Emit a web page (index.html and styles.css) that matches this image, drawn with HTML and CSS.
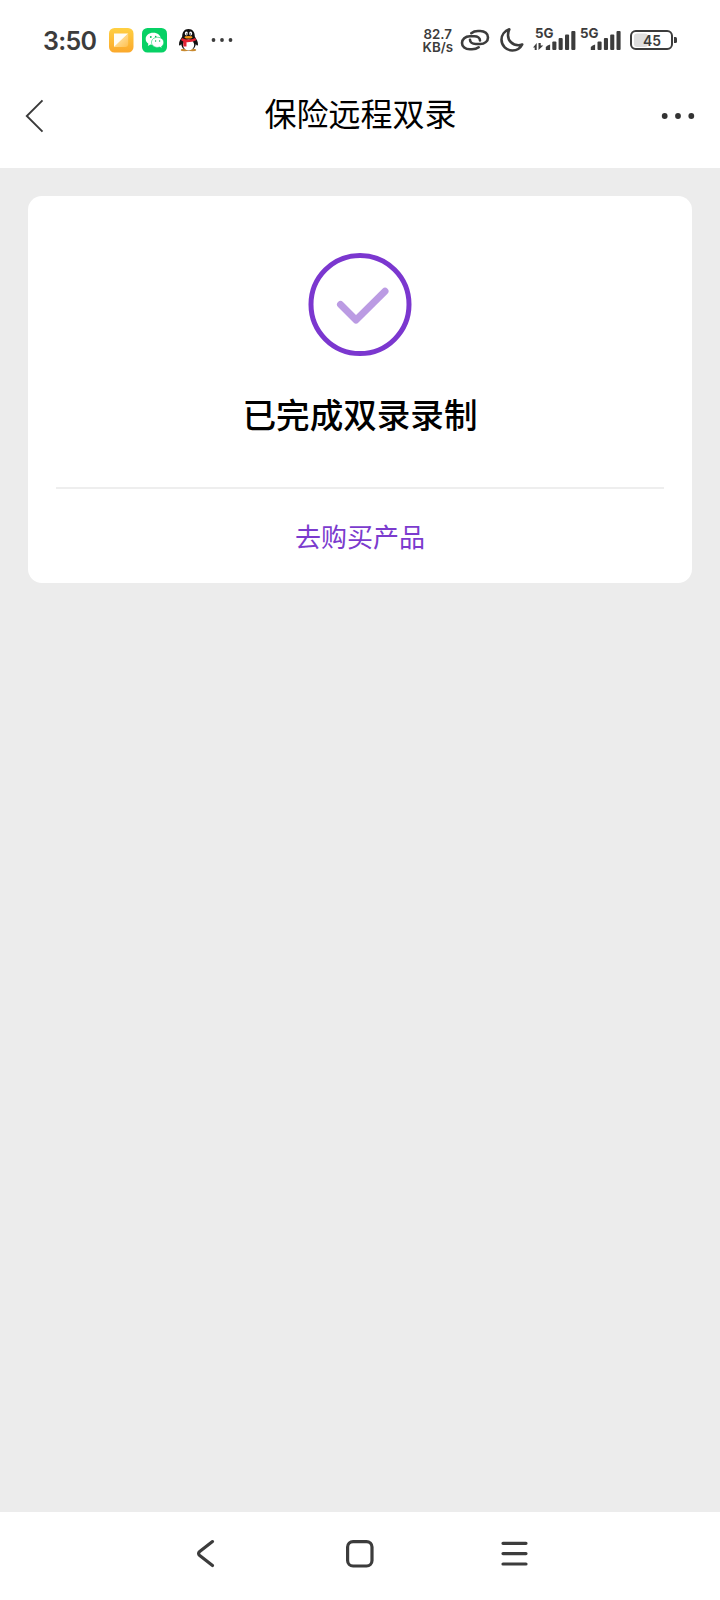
FILE: index.html
```html
<!DOCTYPE html>
<html lang="zh-CN">
<head>
<meta charset="utf-8">
<title>保险远程双录</title>
<link rel="stylesheet" href="styles.css">
</head>
<body>
<div class="screen">
  <div class="status">
    <span class="time">3:50</span>
    <svg class="apps" width="128" height="30" viewBox="106 25 128 30">
      <defs>
        <linearGradient id="sun" x1="0" y1="0" x2="0" y2="1"><stop offset="0" stop-color="#ffd042"/><stop offset="1" stop-color="#fba82c"/></linearGradient>
        <linearGradient id="fold" x1="0" y1="0" x2="1" y2="1"><stop offset="0" stop-color="#fff0c4"/><stop offset="1" stop-color="#ffc04e"/></linearGradient>
      </defs>
      <rect x="109" y="28" width="24.5" height="24.5" rx="5.5" fill="url(#sun)"/>
      <path d="M114 33.500h14.200L114 47.200z" fill="#fffdf5"/>
      <path d="M128.200 33.500V44q0 3-3 3H114z" fill="url(#fold)"/>
      <rect x="142" y="28" width="25" height="24.500" rx="5.500" fill="#07d165"/>
      <path d="M153.300 32.800c-4.400 0-7.600 2.700-7.600 6.100 0 2 1 3.700 2.700 4.800l-.6 2.200 2.700-1.300c1 .3 1.900.4 2.800.4 4.200 0 7.500-2.700 7.500-6.100s-3.200-6.100-7.500-6.100z" fill="#fff"/>
      <path d="M157.600 37.300c-3.700 0-6.100 2.300-6.100 5.100s2.600 5 6.100 5c.8 0 1.500-.1 2.200-.3l2.300 1.200-.6-1.900c1.400-1 2.200-2.400 2.200-4 0-2.800-2.600-5.100-6.100-5.100z" fill="#fff" stroke="#07d165" stroke-width=".6"/>
      <g fill="#07b95a"><circle cx="150.800" cy="37" r=".9"/><circle cx="155.700" cy="36.600" r=".8"/><circle cx="155.600" cy="41" r=".7"/><circle cx="159.600" cy="41" r=".7"/></g>
      <path d="M188.500 29c-4.300 0-6.300 3.200-6.300 7.500-1.500 2.500-3.300 5-3.200 8 .1 1.500 1 1.600 2.200-.5.300 3.200 2.500 6.500 7.300 6.500s7-3.300 7.300-6.500c1.200 2.100 2.100 2 2.200.5.100-3-1.700-5.500-3.200-8 0-4.300-2-7.500-6.300-7.500z" fill="#111"/>
      <ellipse cx="184.500" cy="50" rx="3.700" ry="1.200" fill="#c98a30"/><ellipse cx="192.500" cy="50" rx="3.700" ry="1.200" fill="#c98a30"/>
      <ellipse cx="188.600" cy="44.900" rx="5.600" ry="5.300" fill="#fff"/>
      <path d="M181.900 37.900q6.700 3.200 13.400 0l.9 2.300q-4.500 2.200-9.700 2v4.200h-3.200v-5q-1.500-.6-2.300-1.400z" fill="#e32233"/>
      <ellipse cx="186.400" cy="33.600" rx="1.500" ry="2" fill="#fff"/><ellipse cx="190.600" cy="33.600" rx="1.500" ry="2" fill="#fff"/>
      <circle cx="186.900" cy="34" r=".7" fill="#111"/><circle cx="190.200" cy="34" r=".7" fill="#111"/>
      <ellipse cx="188.500" cy="37.300" rx="4" ry="1.300" fill="#f59a16"/>
      <g fill="#3c3c3c"><circle cx="213.500" cy="40" r="1.900"/><circle cx="222" cy="40" r="1.900"/><circle cx="230.500" cy="40" r="1.900"/></g>
    </svg>
    <div class="speed"><span>82.7</span><span>KB/s</span></div>
    <svg class="signals" width="222" height="36" viewBox="458 22 222 36">
      <g fill="none" stroke="#3c3c3c" stroke-width="2.600" stroke-linecap="round" stroke-linejoin="round">
        <path d="M471.300 33.200Q474 31 478 31h2.200c4.500 0 7.800 2.800 7.800 6.400 0 3.800-3.300 6.600-7.800 6.600h-4.500c-3.400 0-5.700-1.800-5.700-4.200"/>
        <path d="M478.700 47.300Q476 49.300 472 49.300h-2.200c-4.500 0-7.800-2.800-7.800-6.400 0-3.800 3.300-6.600 7.800-6.600h4.500c3.400 0 5.700 1.800 5.700 4.200"/>
        <path d="M509.300 29.300c-4.500 1.500-7.800 5.600-7.800 10.400 0 6 4.900 10.800 10.900 10.800 4.300 0 8-2.400 9.800-6-1.200.5-2.500.7-3.900.7-5.700 0-10.300-4.400-10.300-9.900 0-2.200.4-4.300 1.300-6z"/>
      </g>
      <g class="net"><text x="535" y="38.300" textLength="18.500" lengthAdjust="spacingAndGlyphs">5G</text><text x="580" y="38.300" textLength="18.500" lengthAdjust="spacingAndGlyphs">5G</text></g>
      <g fill="#3c3c3c">
        <path d="M533 47.500l3.700-4.500V50h-2v-2.500zM543.300 45.500L538.500 50v-7h2.200v2.500z"/>
        <path d="M545.800 50v-3q1.500-2 4.300-2.500V50z"/><rect x="552.300" y="41.500" width="4.100" height="8.500" rx="1"/><rect x="558.600" y="38" width="4.100" height="12" rx="1"/><rect x="565" y="34.500" width="4.100" height="15.500" rx="1"/><rect x="571.300" y="31" width="4.100" height="19" rx="1"/>
        <path d="M590.800 50v-3q1.500-2 4.300-2.500V50z"/><rect x="597.500" y="41.500" width="4.100" height="8.500" rx="1"/><rect x="603.900" y="38" width="4.100" height="12" rx="1"/><rect x="610.200" y="34.500" width="4.100" height="15.500" rx="1"/><rect x="616.500" y="31" width="4.100" height="19" rx="1"/>
      </g>
      <rect x="634" y="33.500" width="14" height="13.500" rx="3" fill="#dedede"/>
      <rect x="631" y="31" width="41" height="18" rx="4.800" fill="none" stroke="#3c3c3c" stroke-width="2"/>
      <path d="M674 37h1.500q1.500 0 1.500 1.500v3q0 1.500-1.500 1.500H674z" fill="#3c3c3c"/>
      <text class="level" x="643" y="45.900" textLength="18" lengthAdjust="spacingAndGlyphs">45</text>
    </svg>
  </div>
  <header class="header">
    <svg width="20" height="36" viewBox="25 98 20 36"><path d="M42.500 100.300L26.800 116l15.700 15.700" fill="none" stroke="#3a3a3a" stroke-width="1.900"/></svg>
    <h1 class="title">保险远程双录</h1>
    <svg width="36" height="8" viewBox="661 112 36 8" fill="#333"><circle cx="664.700" cy="116" r="2.900"/><circle cx="678" cy="116" r="2.900"/><circle cx="691.300" cy="116" r="2.900"/></svg>
  </header>
  <main class="content">
    <section class="card">
      <svg class="done" width="104" height="105" viewBox="0 -0.5 104 105" fill="none">
        <circle cx="52" cy="52" r="49" stroke="#7b37cf" stroke-width="5"/>
        <path d="M32.500 52L48 67.500 77 38.700" stroke="#bb9be3" stroke-width="7" stroke-linecap="round" stroke-linejoin="round"/>
      </svg>
      <h2 class="result">已完成双录录制</h2>
      <a class="buy">去购买产品</a>
    </section>
  </main>
  <nav class="nav">
    <svg width="334" height="32" viewBox="196 1537 334 32" fill="none" stroke="#3c3c3c" stroke-width="3.200" stroke-linecap="round">
      <path d="M212.500 1541.600L199.700 1551.500q-2.300 2 0 4L212.500 1565.600" stroke-linejoin="round"/>
      <rect x="347.600" y="1541.600" width="24.400" height="24.400" rx="5.500"/>
      <path d="M503 1543.300h23M503 1553.600h23M503 1564h23"/>
    </svg>
  </nav>
</div>
</body>
</html>
```
FILE: styles.css
```css
* { box-sizing: border-box; }
body {
  margin: 0;
  font-family: Inter, "Noto Sans CJK SC", sans-serif;
  color: #000;
}
.screen {
  width: 720px;
  height: 1600px;
  display: flex;
  flex-direction: column;
  background: #ececec;
}
.status {
  height: 80px;
  flex: none;
  display: flex;
  align-items: center;
  padding: 0 40px 0 43px;
  background: #fff;
  color: #3c3c3c;
}
.time {
  width: 63px;
  padding-top: 2px;
  font-size: 25px;
  font-weight: 600;
  letter-spacing: -0.7px;
  line-height: 30px;
  white-space: nowrap;
}
.speed {
  margin-left: auto;
  margin-right: 5px;
  display: flex;
  flex-direction: column;
  align-items: center;
  padding-top: 1px;
  font-size: 13.3px;
  line-height: 13px;
  font-weight: 600;
}
.signals { flex: none; }
.net, .level {
  fill: #3c3c3c;
  font-size: 13.5px;
  font-weight: 700;
}
.level {
  font-size: 15px;
  font-weight: 600;
}
.header {
  height: 88px;
  flex: none;
  display: flex;
  align-items: center;
  justify-content: space-between;
  padding: 0 23px 16px 25px;
  background: #fff;
}
.title {
  margin: 0 0 8px 15px;
  font-family: "Noto Sans CJK SC", sans-serif;
  font-size: 32px;
  font-weight: 400;
  line-height: 40px;
}
.content {
  flex: 1;
  padding: 28px;
}
.card {
  height: 387px;
  padding: 56px 28px 0;
  border-radius: 14px;
  background: #fff;
  display: flex;
  flex-direction: column;
  align-items: center;
}
.done { flex: none; }
.result {
  margin: 32.5px 0 0;
  font-family: "Noto Sans CJK SC", sans-serif;
  font-size: 33.6px;
  font-weight: 500;
  line-height: 48px;
}
.buy {
  align-self: stretch;
  margin-top: 49.5px;
  border-top: 2px solid #eee;
  padding-top: 27px;
  font-family: "Noto Sans CJK SC", sans-serif;
  font-size: 26px;
  line-height: 40px;
  text-align: center;
  color: #7b3bce;
}
.nav {
  height: 88px;
  flex: none;
  padding: 25px 0 0 196px;
  background: #fff;
}
```
